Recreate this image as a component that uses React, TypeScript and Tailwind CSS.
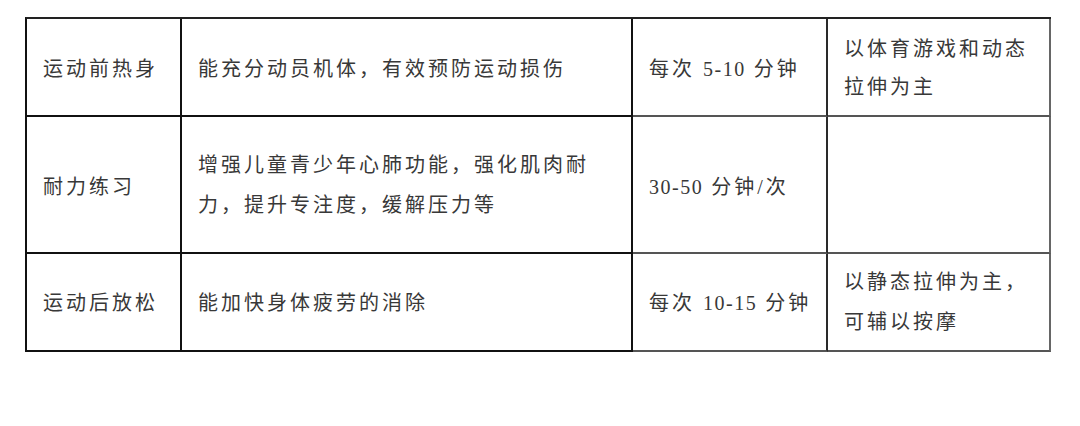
import React from "react";

const L = "border-b-2 border-r-2 border-[#111]";
const R = "border-b-2 border-[#555]";

function Cell({ className, children }: { className: string; children: React.ReactNode }) {
  return <div className={`flex items-center pl-4 pr-2 whitespace-nowrap ${className}`}>{children}</div>;
}

function Num({ children }: { children: React.ReactNode }) {
  return <span className="tracking-[1.5px]">{children}</span>;
}

export default function App() {
  return (
    <div className="w-[1080px] h-[426px] bg-white overflow-hidden font-['Liberation_Serif','Noto_Sans_CJK_SC',serif] text-[20px] tracking-[3px] text-[#383838]">
      <div className="ml-[25px] mt-[17px] w-[1026px] border-l-2 border-t-2 border-l-[#111] border-t-[#222] grid grid-cols-[155px_451px_195px_223px] grid-rows-[98px_137px_98px]">
        <Cell className={L}>
          <span className="pt-[3px]">运动前热身</span>
        </Cell>
        <Cell className={L}>
          <span className="pt-[3px]">能充分动员机体，有效预防运动损伤</span>
        </Cell>
        <Cell className={`${R} border-r-2 border-r-[#2a2a2a]`}>
          <span className="pt-[3px]">
            每次 <Num>5-10</Num> 分钟
          </span>
        </Cell>
        <Cell className={`${R} border-r-2 border-r-[#666]`}>
          <span className="leading-[38px] pt-[2px]">
            以体育游戏和动态
            <br />
            拉伸为主
          </span>
        </Cell>

        <Cell className={L}>
          <span className="pt-[4px]">耐力练习</span>
        </Cell>
        <Cell className={L}>
          <span className="leading-[40px]">
            增强儿童青少年心肺功能，强化肌肉耐
            <br />
            力，提升专注度，缓解压力等
          </span>
        </Cell>
        <Cell className={`${R} border-r-2 border-r-[#2a2a2a]`}>
          <span className="pt-[4px]">
            <Num>30-50</Num> 分钟/次
          </span>
        </Cell>
        <Cell className={`${R} border-r-2 border-r-[#666]`}>
          <span></span>
        </Cell>

        <Cell className={L}>
          <span className="pt-[2px]">运动后放松</span>
        </Cell>
        <Cell className={L}>
          <span className="pt-[2px]">能加快身体疲劳的消除</span>
        </Cell>
        <Cell className={`${R} border-r-2 border-r-[#2a2a2a]`}>
          <span className="pt-[2px]">
            每次 <Num>10-15</Num> 分钟
          </span>
        </Cell>
        <Cell className={`${R} border-r-2 border-r-[#666]`}>
          <span className="leading-[40px]">
            以静态拉伸为主，
            <br />
            可辅以按摩
          </span>
        </Cell>
      </div>
    </div>
  );
}
